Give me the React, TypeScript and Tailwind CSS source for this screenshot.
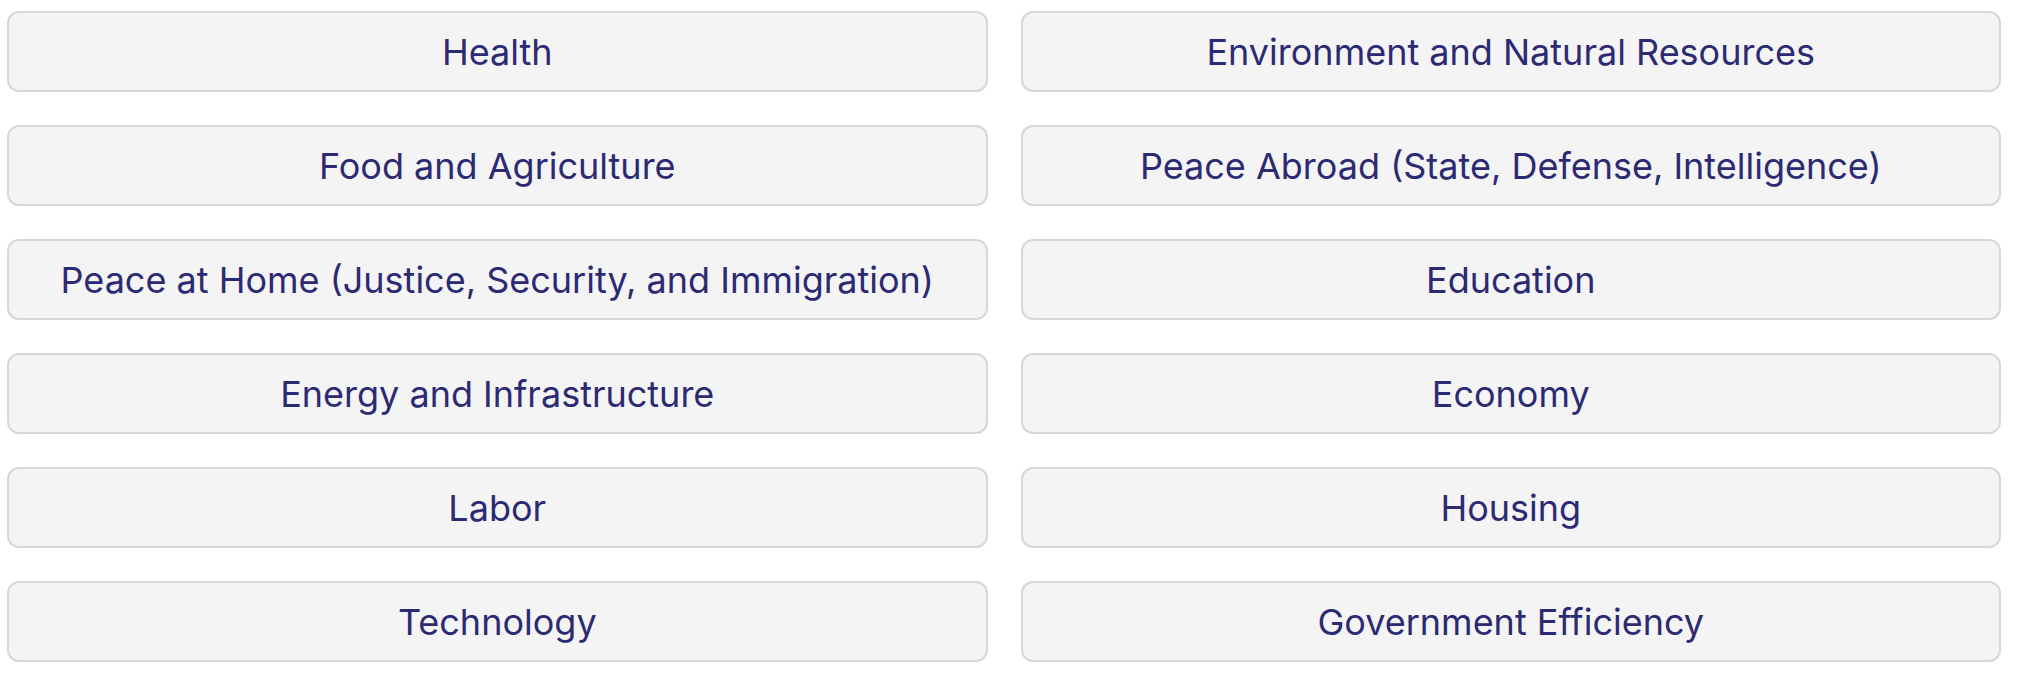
const topics = [
  'Health',
  'Environment and Natural Resources',
  'Food and Agriculture',
  'Peace Abroad (State, Defense, Intelligence)',
  'Peace at Home (Justice, Security, and Immigration)',
  'Education',
  'Energy and Infrastructure',
  'Economy',
  'Labor',
  'Housing',
  'Technology',
  'Government Efficiency',
];

const App = () => {
  return (
    <div className="w-[2018px] bg-white pt-[11px] pr-[17px] pl-[7px] font-['Inter',sans-serif]">
      <div className="grid grid-cols-2 gap-x-[33px] gap-y-[33px]">
        {topics.map(topic => (
          <button
            key={topic}
            className="flex h-[81px] items-center justify-center rounded-[12px] border-2 border-[#d4d7de] bg-[#f4f4f5] text-[36px] text-[#2c2a72]">
            {topic}
          </button>
        ))}
      </div>
    </div>
  );
};

export default App;
